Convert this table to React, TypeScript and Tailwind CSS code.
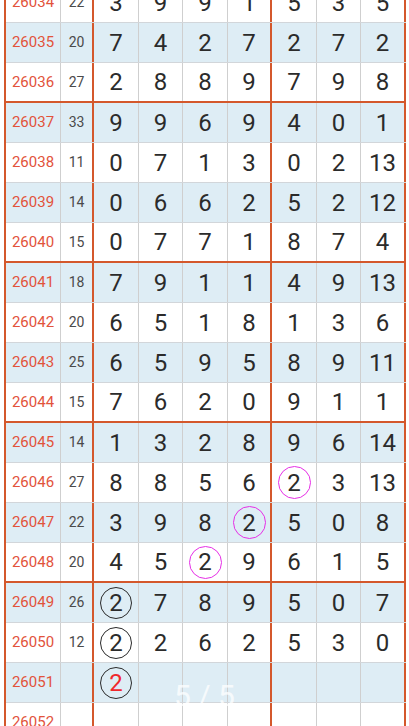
type Mark = "none" | "pink" | "black" | "red";

interface Row {
  issue: string;
  sum: string;
  nums: string[];
  marks?: Record<number, Mark>;
}

const rows: Row[] = [
  { issue: "26034", sum: "22", nums: ["3", "9", "9", "1", "5", "3", "5"] },
  { issue: "26035", sum: "20", nums: ["7", "4", "2", "7", "2", "7", "2"] },
  { issue: "26036", sum: "27", nums: ["2", "8", "8", "9", "7", "9", "8"] },
  { issue: "26037", sum: "33", nums: ["9", "9", "6", "9", "4", "0", "1"] },
  { issue: "26038", sum: "11", nums: ["0", "7", "1", "3", "0", "2", "13"] },
  { issue: "26039", sum: "14", nums: ["0", "6", "6", "2", "5", "2", "12"] },
  { issue: "26040", sum: "15", nums: ["0", "7", "7", "1", "8", "7", "4"] },
  { issue: "26041", sum: "18", nums: ["7", "9", "1", "1", "4", "9", "13"] },
  { issue: "26042", sum: "20", nums: ["6", "5", "1", "8", "1", "3", "6"] },
  { issue: "26043", sum: "25", nums: ["6", "5", "9", "5", "8", "9", "11"] },
  { issue: "26044", sum: "15", nums: ["7", "6", "2", "0", "9", "1", "1"] },
  { issue: "26045", sum: "14", nums: ["1", "3", "2", "8", "9", "6", "14"] },
  { issue: "26046", sum: "27", nums: ["8", "8", "5", "6", "2", "3", "13"], marks: { 4: "pink" } },
  { issue: "26047", sum: "22", nums: ["3", "9", "8", "2", "5", "0", "8"], marks: { 3: "pink" } },
  { issue: "26048", sum: "20", nums: ["4", "5", "2", "9", "6", "1", "5"], marks: { 2: "pink" } },
  { issue: "26049", sum: "26", nums: ["2", "7", "8", "9", "5", "0", "7"], marks: { 0: "black" } },
  { issue: "26050", sum: "12", nums: ["2", "2", "6", "2", "5", "3", "0"], marks: { 0: "black" } },
  { issue: "26051", sum: "", nums: ["2", "", "", "", "", "", ""], marks: { 0: "red" } },
  { issue: "26052", sum: "", nums: ["", "", "", "", "", "", ""] },
];

// widths incl. right border
const numCols = [
  "w-[45px] border-r border-[#cfcfcf]",
  "w-[44px] border-r border-[#cfcfcf]",
  "w-[45px] border-r border-[#cfcfcf]",
  "w-[44px] border-r-2 border-[#d4582c]",
  "w-[45px] border-r border-[#cfcfcf]",
  "w-[44px] border-r border-[#cfcfcf]",
  "w-[45px] border-r-2 border-[#d4582c]",
];

function Num({ value, mark }: { value: string; mark: Mark }) {
  if (mark === "pink") {
    return (
      <span className="flex h-[33px] w-[33px] items-center justify-center rounded-full border border-[#e62ee6]">
        {value}
      </span>
    );
  }
  if (mark === "black" || mark === "red") {
    return (
      <span
        className={`flex h-[32px] w-[32px] items-center justify-center rounded-full border border-[#2a2a2a] ${
          mark === "red" ? "text-[#f0282c]" : ""
        }`}
      >
        {value}
      </span>
    );
  }
  return <span>{value}</span>;
}

export default function App() {
  return (
    <div className="relative h-[726px] w-[409px] overflow-hidden bg-white" style={{ fontFamily: "Roboto, 'Noto Sans', sans-serif" }}>
      <div className="-mt-[17px] ml-[4px] w-[402px] border-l-2 border-[#d4582c]">
        {rows.map((r) => {
          const n = Number(r.issue);
          const groupEnd = (n - 26032) % 4 === 0;
          const blue = n % 2 === 1;
          return (
            <div
              key={r.issue}
              className={`flex h-[40px] ${blue ? "bg-[#deedf5]" : "bg-white"} ${
                groupEnd ? "border-b-2 border-[#d4582c]" : "border-b border-[#d2d6da]"
              }`}
            >
              <div className="flex w-[55px] items-center justify-center border-r border-[#cfcfcf] text-[15px] text-[#e2533b]">
                {r.issue}
              </div>
              <div className="flex w-[33px] items-center justify-center border-r-2 border-[#d4582c] text-[14px] text-[#4a4a4a]">
                {r.sum}
              </div>
              {r.nums.map((v, j) => (
                <div
                  key={j}
                  className={`flex items-center justify-center text-[24px] leading-none text-[#2b2b2b] ${numCols[j]}`}
                >
                  <Num value={v} mark={r.marks?.[j] ?? "none"} />
                </div>
              ))}
            </div>
          );
        })}
      </div>
      <div className="absolute left-0 right-0 top-[681px] text-center text-[30px] leading-none text-white/75">
        5 / 5
      </div>
    </div>
  );
}
